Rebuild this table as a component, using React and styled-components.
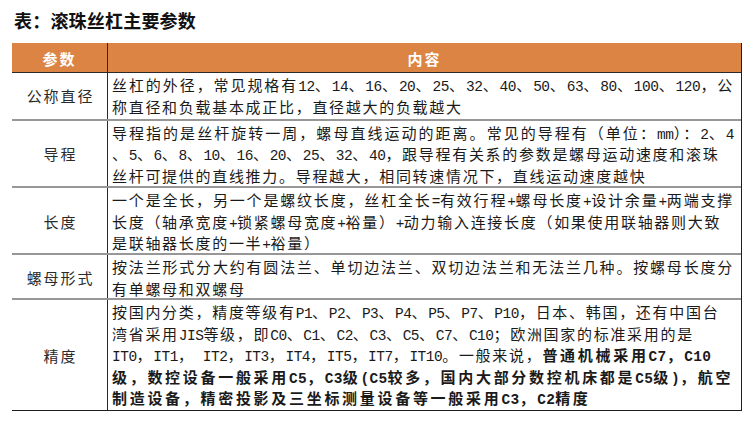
import React from "react";
import styled, { createGlobalStyle } from "styled-components";

const Global = createGlobalStyle`
  html, body { margin: 0; padding: 0; background: #ffffff; }
  body { font-family: "Noto Sans CJK SC", "Liberation Sans", sans-serif; color: #1c1c1c; }
`;

const Page = styled.div`
  width: 756px;
  height: 431px;
  box-sizing: border-box;
  padding: 8px 0 0 12px;
  display: flex;
  flex-direction: column;
  gap: 10px;
`;

const Title = styled.h1`
  margin: 0 0 0 2px;
  font-family: "Noto Sans CJK SC", sans-serif;
  font-size: 18px;
  line-height: 25px;
  font-weight: 700;
  color: #111;
  letter-spacing: 0.2px;
`;

const Table = styled.div`
  width: 730px;
  display: flex;
  flex-direction: column;
  border-right: 1.5px solid #1e1e1e;
  border-bottom: 1.5px solid #1e1e1e;
  box-sizing: border-box;
`;

const Row = styled.div`
  display: grid;
  grid-template-columns: 96px 1fr;
  height: ${(p) => p.$h}px;
  box-sizing: border-box;
  border-top: ${(p) => (p.$sep ? "2px solid #979797" : "none")};
`;

const HeadRow = styled.div`
  display: grid;
  grid-template-columns: 96px 1fr;
  height: 30px;
  box-sizing: border-box;
  background: #dc8444;
  border-bottom: 1px solid #2a2a2a;
`;

const HeadCell = styled.div`
  display: flex;
  align-items: center;
  justify-content: center;
  padding-top: 2px;
  color: #ffffff;
  font-family: "Noto Sans CJK SC", sans-serif;
  font-size: 15px;
  font-weight: 700;
  letter-spacing: 2px;
  border-right: ${(p) => (p.$divider ? "1px solid #2a2a2a" : "none")};
`;

const Label = styled.div`
  display: flex;
  align-items: center;
  justify-content: center;
  padding-left: 2px;
  color: #2b2b2b;
  font-family: "Noto Sans CJK SC", sans-serif;
  font-size: 15px;
  letter-spacing: 1.9px;
  border-right: 1px solid #2a2a2a;
`;

const Content = styled.div`
  padding: 1px 7px 1px 4px;
  font-family: "Noto Sans CJK SC", sans-serif;
  font-size: 15px;
  line-height: 21.5px;
  letter-spacing: 1.7px;
  color: #1a1a1a;
  min-width: 0;
`;

const Line = styled.div`
  height: 21.5px;
  white-space: ${(p) => (p.$justify ? "normal" : "nowrap")};
  text-align: ${(p) => (p.$justify ? "justify" : "left")};
  text-align-last: ${(p) => (p.$justify ? "justify" : "auto")};
  text-justify: inter-character;
`;

const Latin = styled.span`
  font-family: "Liberation Mono", "DejaVu Sans Mono", monospace;
  font-size: 14.5px;
  line-height: 1;
  letter-spacing: -0.5px;
`;

const Strong = styled.span`
  font-weight: 700;
  letter-spacing: 2.7px;
  & > span {
    letter-spacing: 0.3px;
  }
`;

const fmt = (s) =>
  s
    .split(/([\x20-\x7e]+)/)
    .filter((x) => x.length)
    .map((part, i) =>
      /^[\x20-\x7e]+$/.test(part) ? (
        <Latin key={i}>{part}</Latin>
      ) : (
        <React.Fragment key={i}>{part}</React.Fragment>
      )
    );

const rows = [
  {
    label: "公称直径",
    h: 45.5,
    lines: [
      { t: "丝杠的外径，常见规格有12、14、16、20、25、32、40、50、63、80、100、120，公", j: true },
      { t: "称直径和负载基本成正比，直径越大的负载越大" },
    ],
  },
  {
    label: "导程",
    h: 67.5,
    lines: [
      { t: "导程指的是丝杆旋转一周，螺母直线运动的距离。常见的导程有（单位：mm）：2、4", j: true },
      { t: "、5、6、8、10、16、20、25、32、40，跟导程有关系的参数是螺母运动速度和滚珠" },
      { t: "丝杆可提供的直线推力。导程越大，相同转速情况下，直线运动速度越快" },
    ],
  },
  {
    label: "长度",
    h: 67,
    lines: [
      { t: "一个是全长，另一个是螺纹长度，丝杠全长=有效行程+螺母长度+设计余量+两端支撑", j: true },
      { t: "长度（轴承宽度+锁紧螺母宽度+裕量）+动力输入连接长度（如果使用联轴器则大致" },
      { t: "是联轴器长度的一半+裕量）" },
    ],
  },
  {
    label: "螺母形式",
    h: 45,
    lines: [
      { t: "按法兰形式分大约有圆法兰、单切边法兰、双切边法兰和无法兰几种。按螺母长度分", j: true },
      { t: "有单螺母和双螺母" },
    ],
  },
  {
    label: "精度",
    h: 112,
    lines: [
      { t: "按国内分类，精度等级有P1、P2、P3、P4、P5、P7、P10，日本、韩国，还有中国台" },
      { t: "湾省采用JIS等级，即C0、C1、C2、C3、C5、C7、C10；欧洲国家的标准采用的是" },
      { t: "IT0，IT1， IT2，IT3，IT4，IT5，IT7，IT10。一般来说，", b: "普通机械采用C7，C10" },
      { b: "级，数控设备一般采用C5，C3级(C5较多，国内大部分数控机床都是C5级)，航空" },
      { b: "制造设备，精密投影及三坐标测量设备等一般采用C3，C2精度" },
    ],
  },
];

export default function App() {
  return (
    <>
      <Global />
      <Page>
        <Title>表：滚珠丝杠主要参数</Title>
        <Table>
          <HeadRow>
            <HeadCell $divider>参数</HeadCell>
            <HeadCell>内容</HeadCell>
          </HeadRow>
          {rows.map((r, i) => (
            <Row key={r.label} $h={r.h} $sep={i > 0}>
              <Label>{r.label}</Label>
              <Content>
                {r.lines.map((l, j) => (
                  <Line key={j} $justify={!!l.j}>
                    {l.t ? fmt(l.t) : null}
                    {l.b ? <Strong>{fmt(l.b)}</Strong> : null}
                  </Line>
                ))}
              </Content>
            </Row>
          ))}
        </Table>
      </Page>
    </>
  );
}
